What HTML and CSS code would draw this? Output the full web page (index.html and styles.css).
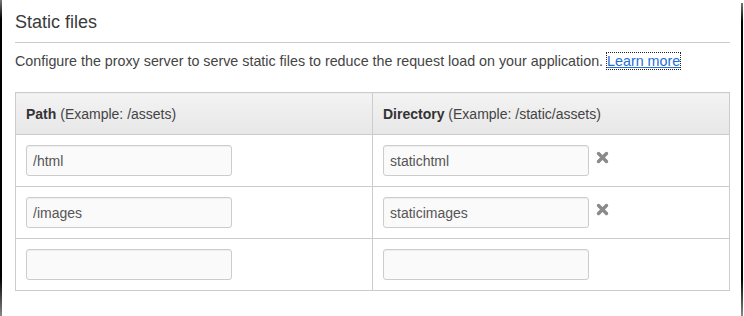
FILE: index.html
```html
<!DOCTYPE html>
<html lang="en">
<head>
  <meta charset="UTF-8" />
  <meta name="viewport" content="width=device-width, initial-scale=1.0" />
  <title>Static files</title>
  <link rel="stylesheet" href="styles.css">
</head>
<body>
  <div class="frame">
    <section class="panel">
      <h2 class="panel-title">Static files</h2>

      <p class="panel-desc">
        Configure the proxy server to serve static files to reduce the request load on your application.
        <a class="learn-link" href="#">Learn more</a>
      </p>

      <!-- Pfad / Verzeichnis Tabelle -->
      <table class="static-table">
        <thead>
          <tr>
            <th><b>Path</b> (Example: /assets)</th>
            <th><b>Directory</b> (Example: /static/assets)</th>
          </tr>
        </thead>
        <tbody>
          <tr>
            <td><input class="input-field" type="text" value="/html"></td>
            <td>
              <input class="input-field" type="text" value="statichtml">
              <span class="remove-icon">
                <svg width="13" height="13" viewBox="0 0 13 13"><path d="M2.5 2.5 L10.5 10.5 M10.5 2.5 L2.5 10.5" stroke="#8a8a8a" stroke-width="3.4" stroke-linecap="round"/></svg>
              </span>
            </td>
          </tr>
          <tr>
            <td><input class="input-field" type="text" value="/images"></td>
            <td>
              <input class="input-field" type="text" value="staticimages">
              <span class="remove-icon">
                <svg width="13" height="13" viewBox="0 0 13 13"><path d="M2.5 2.5 L10.5 10.5 M10.5 2.5 L2.5 10.5" stroke="#8a8a8a" stroke-width="3.4" stroke-linecap="round"/></svg>
              </span>
            </td>
          </tr>
          <tr>
            <td><input class="input-field" type="text" value=""></td>
            <td><input class="input-field" type="text" value=""></td>
          </tr>
        </tbody>
      </table>
    </section>
  </div>
</body>
</html>
```

FILE: styles.css
```css
html, body {
  margin: 0;
  background: #fff;
  font-family: 'Liberation Sans', Arial, sans-serif;
}

/* Fensterrand links und rechts */
.frame {
  position: relative;
  height: 316px;
  padding: 0 14px 0 15px;
  box-sizing: border-box;
}

.frame::before,
.frame::after {
  content: "";
  position: absolute;
  top: 0;
  bottom: 0;
  width: 2px;
  background: linear-gradient(#777 0%, #000 6%, #000 88%, #888 100%);
}

.frame::before {
  left: 0;
}

.frame::after {
  right: 1px;
  top: 3px;
}

.panel {
  padding-top: 11px;
}

.panel-title {
  margin: 0;
  font-size: 18px;
  font-weight: normal;
  line-height: 22px;
  color: #3a3a3a;
  padding-bottom: 9px;
  border-bottom: 1px solid #ccc;
}

.panel-desc {
  margin: 8px 0 21px;
  font-size: 14.3px;
  line-height: 20px;
  color: #444;
}

.learn-link {
  color: #1f6fd6;
  text-decoration: underline;
  outline: 1px dotted #222;
}

.static-table {
  width: 715px;
  border-collapse: collapse;
  border: 1px solid #ccc;
  table-layout: fixed;
}

.static-table th {
  height: 41px;
  padding: 0 10px;
  text-align: left;
  font-size: 14px;
  font-weight: normal;
  color: #444;
  background: linear-gradient(#f3f3f3, #e7e7e7);
  border: 1px solid #ccc;
}

.static-table th b {
  color: #333;
}

.static-table td {
  padding: 10px 10px;
  border: 1px solid #ccc;
  vertical-align: middle;
  white-space: nowrap;
}

/* Eingabefelder */
.input-field {
  width: 206px;
  height: 31px;
  box-sizing: border-box;
  padding: 0 6px;
  font-family: 'Liberation Sans', Arial, sans-serif;
  font-size: 14px;
  color: #555;
  background: #fafafa;
  border: 1px solid #ccc;
  border-radius: 3px;
  box-shadow: inset 0 1px 1px rgba(0, 0, 0, 0.05);
  vertical-align: middle;
}

.remove-icon {
  display: inline-block;
  margin-left: 3px;
  vertical-align: middle;
  line-height: 0;
  position: relative;
  top: -3px;
}
```
